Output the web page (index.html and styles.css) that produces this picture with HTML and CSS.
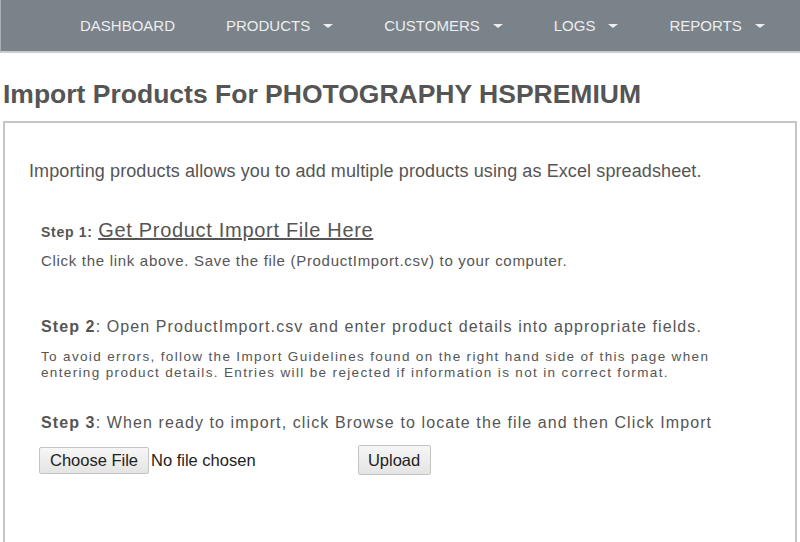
FILE: index.html
```html
<!DOCTYPE html>
<html>
<head>
<meta charset="utf-8">
<link rel="stylesheet" href="styles.css">
</head>
<body>
<nav class="nav">
  <a class="nav-item">DASHBOARD</a>
  <a class="nav-item">PRODUCTS<span class="caret"></span></a>
  <a class="nav-item">CUSTOMERS<span class="caret"></span></a>
  <a class="nav-item">LOGS<span class="caret"></span></a>
  <a class="nav-item">REPORTS<span class="caret"></span></a>
</nav>
<h1 class="title">Import Products For PHOTOGRAPHY HSPREMIUM</h1>
<section class="panel">
  <p class="intro">Importing products allows you to add multiple products using as Excel spreadsheet.</p>
  <div class="step step1">
    <p class="step-head"><b class="step-label">Step 1:</b> <a class="dl-link" href="#">Get Product Import File Here</a></p>
    <p class="step-note">Click the link above. Save the file (ProductImport.csv) to your computer.</p>
  </div>
  <div class="step step2">
    <p class="step-main"><b>Step 2</b>: Open ProductImport.csv and enter product details into appropriate fields.</p>
    <p class="step-small">To avoid errors, follow the Import Guidelines found on the right hand side of this page when<br>entering product details. Entries will be rejected if information is not in correct format.</p>
  </div>
  <div class="step step3">
    <p class="step-main"><b>Step 3</b>: When ready to import, click Browse to locate the file and then Click Import</p>
    <div class="upload-row">
      <button class="btn choose">Choose File</button>
      <span class="nofile">No file chosen</span>
      <button class="btn upload">Upload</button>
    </div>
  </div>
</section>
</body>
</html>
```
FILE: styles.css
```css
* { box-sizing: border-box; }
html, body { margin: 0; padding: 0; background: #fff; }
body { font-family: "Liberation Sans", Arial, sans-serif; color: #555; width: 800px; height: 542px; overflow: hidden; }
.nav {
  height: 53px;
  background: #7b838a;
  border-bottom: 2px solid #c9cdd0;
  border-left: 1px solid #a9afb4;
  display: flex;
  align-items: center;
  padding-left: 79px;
}
.nav-item {
  color: #eceeef;
  font-size: 15px;
  display: flex;
  align-items: center;
  margin-right: 51px;
}
.caret {
  display: inline-block;
  width: 0; height: 0;
  margin-left: 13px;
  border-left: 5px solid transparent;
  border-right: 5px solid transparent;
  border-top: 4px solid #eceeef;
}
.title {
  margin: 24px 0 0 3px;
  font-size: 26.5px;
  font-weight: bold;
  color: #555;
  line-height: 34px;
}
.panel {
  margin: 10px 3px 0 3px;
  height: 424px;
  border: 2px solid #c6c6c6;
  padding: 37px 0 0 24px;
}
p { margin: 0; }
.intro { font-size: 18px; line-height: 22px; letter-spacing: 0.1px; }
.step { padding-left: 12px; }
.step1 { margin-top: 36px; }
.step-head { font-size: 20px; line-height: 24px; }
.step-label { font-size: 14px; letter-spacing: 0.7px; }
.dl-link { color: #555; text-decoration: underline; letter-spacing: 0.7px; }
.step-note { margin-top: 8px; font-size: 15px; line-height: 18px; letter-spacing: 0.7px; }
.step2 { margin-top: 46px; }
.step-main { font-size: 16px; line-height: 22px; letter-spacing: 1.1px; }
.step-small { margin-top: 11px; font-size: 13.5px; line-height: 16px; letter-spacing: 1.35px; }
.step3 { margin-top: 31px; }
.upload-row { display: flex; align-items: center; margin-top: 11px; }
.btn {
  font-family: "Liberation Sans", Arial, sans-serif;
  font-size: 16.5px;
  color: #222;
  background: linear-gradient(#f6f6f6, #e4e4e4);
  border: 1px solid #c4c4c4;
  border-radius: 2px;
  padding: 0 8px;
}
.choose { width: 110px; height: 27px; margin-left: -2px; }
.nofile { font-size: 16.5px; color: #222; margin-left: 2px; }
.upload { width: 73px; height: 30px; margin-left: 102px; }
```
